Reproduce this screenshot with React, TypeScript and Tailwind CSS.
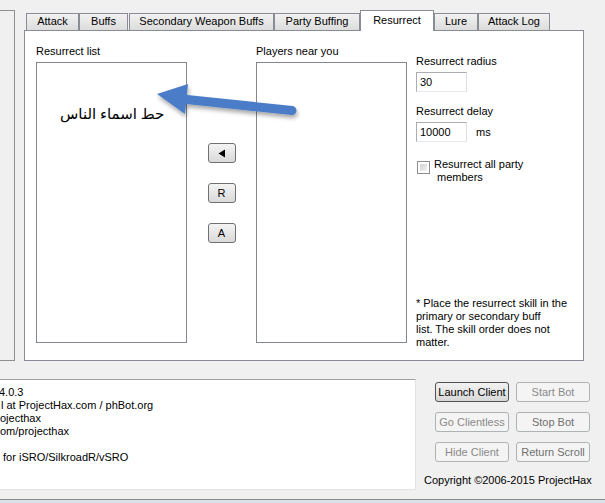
import React from "react";

const tabs = [
  { label: "Attack", w: "w-[53px]", ml: "" },
  { label: "Buffs", w: "w-[49px]", ml: "" },
  { label: "Secondary Weapon Buffs", w: "w-[145px]", ml: "ml-[1px]" },
  { label: "Party Buffing", w: "w-[86px]", ml: "" },
  { label: "Resurrect", w: "w-[74px]", ml: "", active: true },
  { label: "Lure", w: "w-[44px]", ml: "" },
  { label: "Attack Log", w: "w-[72px]", ml: "" },
];

function Tab({ label, w, ml, active }: { label: string; w: string; ml: string; active?: boolean }) {
  if (active) {
    return (
      <div
        className={`${w} ${ml} relative z-10 -mb-px h-[21px] border border-b-0 border-[#898c95] bg-white pt-[3px] text-center`}
      >
        {label}
      </div>
    );
  }
  return (
    <div
      className={`${w} ${ml} h-[17px] border border-b-0 border-[#898c95] bg-gradient-to-b from-[#f2f2f2] to-[#dcdcdc] pt-[1px] text-center`}
    >
      {label}
    </div>
  );
}

function SmallButton({ children }: { children: React.ReactNode }) {
  return (
    <div className="flex h-[20px] w-[28px] items-center justify-center rounded-[3px] border border-[#707070] bg-gradient-to-b from-[#f4f4f4] to-[#dadada] text-[11px] text-black">
      {children}
    </div>
  );
}

function BigButton({ label, kind }: { label: string; kind: "default" | "disabled" | "dim" }) {
  if (kind === "default") {
    return (
      <div className="flex h-[20px] w-[74px] items-center justify-center rounded-[3px] border border-[#505050] bg-gradient-to-b from-[#f3f3f3] to-[#d8d8d8] text-black">
        {label}
      </div>
    );
  }
  return (
    <div
      className={`flex h-[20px] w-[74px] items-center justify-center rounded-[3px] border border-[#adb2b5] bg-[#f4f4f4] ${
        kind === "dim" ? "text-[#707070]" : "text-[#8a8a8a]"
      }`}
    >
      {label}
    </div>
  );
}

export default function App() {
  return (
    <div className="relative h-[503px] w-[605px] overflow-hidden bg-[#f0f0f0] font-['Liberation_Sans',Arial,sans-serif] text-[11px] leading-[13px] text-black">
      {/* top area */}
      <div className="flex pt-[10px]">
        <div className="h-[351px] w-[15px] border-b border-r border-t border-[#8e8f8f]" />
        <div className="ml-[9px] flex w-[560px] flex-col">
          <div className="flex h-[20px] items-end pl-[2px]">
            {tabs.map((t) => (
              <Tab key={t.label} {...t} />
            ))}
          </div>
          <div className="flex h-[331px] border border-[#898c95] bg-white pb-[11px] pl-[11px] pt-[14px]">
            {/* column 1 */}
            <div className="flex w-[151px] flex-col">
              <div className="mb-[4px] h-[13px]">Resurrect list</div>
              <div className="h-[281px] border border-[#828790] bg-white pl-[23px] pt-[41px]">
                <div
                  dir="rtl"
                  className="inline-block font-['Liberation_Serif','DejaVu_Serif','DejaVu_Sans',serif] text-[15px] leading-[20px]"
                >
                  حط اسماء الناس
                </div>
              </div>
            </div>
            {/* column 2 */}
            <div className="flex w-[69px] flex-col items-center gap-[20px] pt-[98px]">
              <SmallButton>
                <svg width="8" height="9" viewBox="0 0 8 9">
                  <polygon points="0.5,4.5 7,0.5 7,8.5" fill="#000" />
                </svg>
              </SmallButton>
              <SmallButton>R</SmallButton>
              <SmallButton>A</SmallButton>
            </div>
            {/* column 3 */}
            <div className="flex w-[151px] flex-col">
              <div className="mb-[4px] h-[13px]">Players near you</div>
              <div className="h-[281px] border border-[#828790] bg-white" />
            </div>
            {/* column 4 */}
            <div className="ml-[9px] flex flex-1 flex-col">
              <div className="mt-[10px] h-[13px]">Resurrect radius</div>
              <div className="mt-[4px] flex h-[20px] w-[51px] items-center border border-[#abadb3] border-b-[#e3e9ef] border-r-[#dbdfe6] bg-white pl-[3px]">
                30
              </div>
              <div className="mt-[13px] h-[13px]">Resurrect delay</div>
              <div className="mt-[4px] flex items-center">
                <div className="flex h-[20px] w-[51px] items-center border border-[#abadb3] border-b-[#e3e9ef] border-r-[#dbdfe6] bg-white pl-[3px]">
                  10000
                </div>
                <div className="ml-[9px]">ms</div>
              </div>
              <div className="mt-[16px] flex items-start">
                <div className="ml-[1px] mt-[3px] h-[13px] w-[13px] border border-[#8f8f8f] bg-white p-[2px]">
                  <div className="h-full w-full bg-gradient-to-br from-[#d0d0d0] to-[#f4f4f4]" />
                </div>
                <div className="ml-[4px]">
                  <div>Resurrect all party</div>
                  <div className="pl-[3px]">members</div>
                </div>
              </div>
              <div className="mt-auto">
                <div>* Place the resurrect skill in the</div>
                <div>primary or secondary buff</div>
                <div>list. The skill order does not</div>
                <div>matter.</div>
              </div>
            </div>
          </div>
        </div>
      </div>

      {/* bottom area */}
      <div className="mt-[18px] flex">
        <div className="h-[111px] w-[416px] border-b border-r border-t border-[#e3e3e3] border-t-[#a0a0a0] bg-white pt-[6px] whitespace-pre">
          <div className="ml-[-1px]">4.0.3</div>
          <div className="ml-[1px]">l at ProjectHax.com / phBot.org</div>
          <div>ojecthax</div>
          <div>om/projecthax</div>
          <div>&nbsp;</div>
          <div> for iSRO/SilkroadR/vSRO</div>
        </div>
        <div className="flex flex-col pl-[8px] pt-[3px]">
          <div className="ml-[11px] grid grid-cols-[74px_74px] gap-x-[7px] gap-y-[10px]">
            <BigButton label="Launch Client" kind="default" />
            <BigButton label="Start Bot" kind="disabled" />
            <BigButton label="Go Clientless" kind="disabled" />
            <BigButton label="Stop Bot" kind="dim" />
            <BigButton label="Hide Client" kind="disabled" />
            <BigButton label="Return Scroll" kind="dim" />
          </div>
          <div className="mt-[12px] whitespace-nowrap">Copyright ©2006-2015 ProjectHax</div>
        </div>
      </div>
      <div className="mt-[9px] h-px bg-[#8a8a8a]" />
      <div className="h-[4px] bg-[#d9e1ea]" />

      {/* annotation arrow */}
      <svg className="pointer-events-none absolute left-0 top-0" width="605" height="503">
        <defs>
          <filter id="sh" x="-20%" y="-60%" width="140%" height="220%">
            <feDropShadow dx="1" dy="3" stdDeviation="2" floodColor="#000" floodOpacity="0.35" />
          </filter>
        </defs>
        <g filter="url(#sh)">
          <line x1="182" y1="99" x2="292" y2="110.5" stroke="#4b7bc8" strokeWidth="9" strokeLinecap="round" />
          <polygon points="157,94 188,84 185,114" fill="#4b7bc8" />
        </g>
      </svg>
    </div>
  );
}
